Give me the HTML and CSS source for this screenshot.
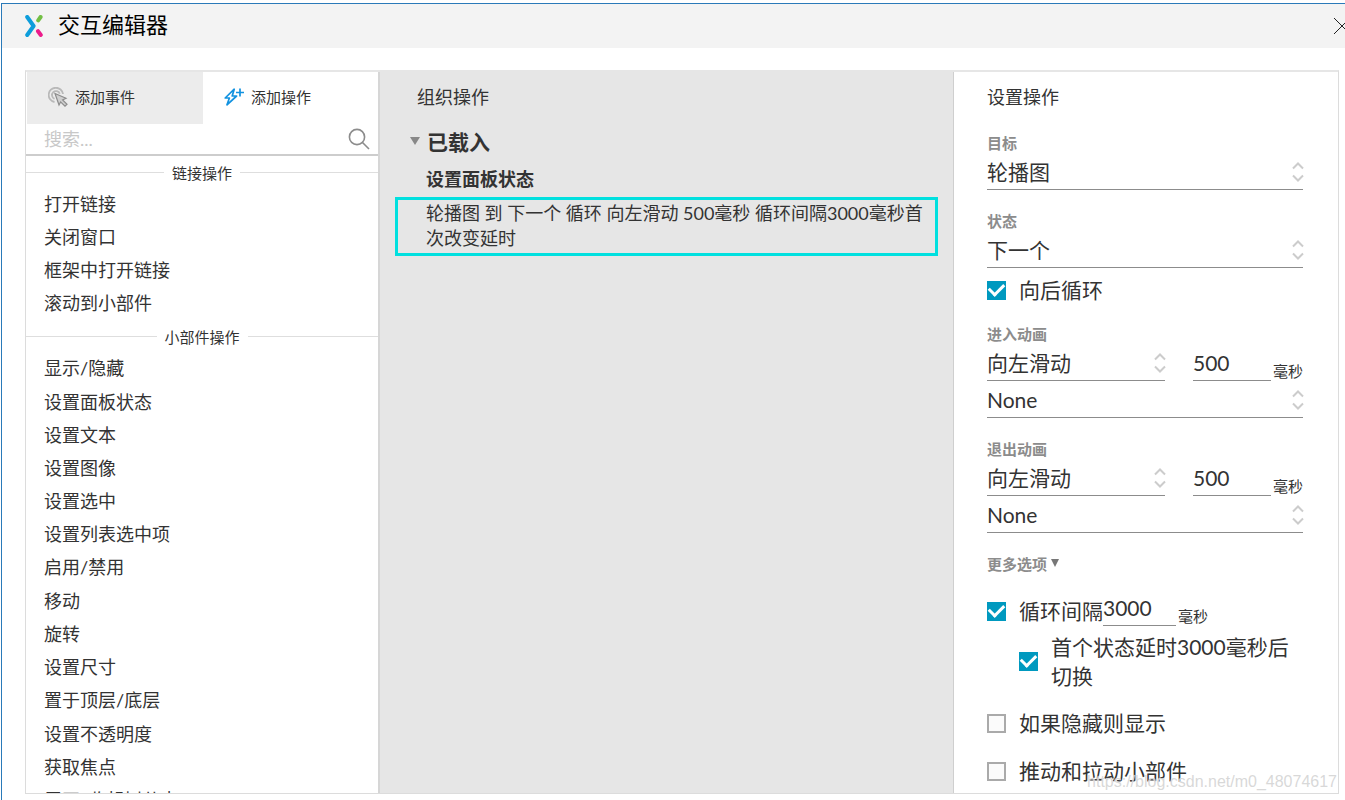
FILE: index.html
```html
<!DOCTYPE html>
<html lang="zh-CN">
<head>
<meta charset="utf-8">
<meta name="viewport" content="width=device-width, initial-scale=1">
<title>交互编辑器</title>
<link rel="stylesheet" href="styles.css">
</head>
<body>
<svg class="sprite" aria-hidden="true">
  <symbol id="updown" viewBox="0 0 12 20"><path d="M1 6.5 6 1.5 11 6.5M1 13.5 6 18.5 11 13.5"/></symbol>
</svg>
<div class="window">
  <header class="titlebar">
    <svg class="logo" viewBox="0 0 18 22" aria-hidden="true">
      <path d="M2.2 2 8.6 11 2.2 20" stroke="#0d9ddb"/>
      <path d="M15.6 2 13.2 5.4" stroke="#72bf44"/>
      <path d="M13 16.2 15.8 20" stroke="#ec1c8b"/>
    </svg>
    <h1 class="title">交互编辑器</h1>
    <button class="close" type="button" aria-label="关闭">
      <svg viewBox="0 0 16 16" aria-hidden="true"><path d="M0 0 16 16M16 0 0 16"/></svg>
    </button>
  </header>

  <main class="panels">
    <section class="panel library">
      <div class="tabs">
        <button class="tab" type="button">
          <svg class="icon-event" viewBox="0 0 20 20" aria-hidden="true">
            <g fill="none" stroke="#b9b9b9" stroke-width="1.8"><path d="M6.5 15A7.2 7.2 0 1 1 15 7"/><path d="M6.5 11.8A4 4 0 1 1 11.8 6.8"/></g>
            <path d="M7 6.5 18 11.3 14.6 12.9 19 17.3 17 19.2 12.6 14.9 11 18Z" fill="#cfcfcf" stroke="#8d8d8d" stroke-width="1.2"/>
          </svg>
          添加事件
        </button>
        <button class="tab tab-active" type="button">
          <svg class="icon-action" viewBox="0 0 20 18" aria-hidden="true"><path d="M10.2 1.2 1.2 10H5.4L3 16.8 12.6 8H8.2ZM16 .4V8.6M12 4.5H20"/></svg>
          添加操作
        </button>
      </div>
      <div class="search">
        <input class="search-input" type="text" placeholder="搜索..." aria-label="搜索">
        <svg class="icon-search" viewBox="0 0 22 22" aria-hidden="true"><circle cx="9" cy="9" r="7.6"/><path d="M14.5 14.5 21 21"/></svg>
      </div>
      <h2 class="group-title">链接操作</h2>
      <ul class="actions">
        <li><button class="action" type="button">打开链接</button></li>
        <li><button class="action" type="button">关闭窗口</button></li>
        <li><button class="action" type="button">框架中打开链接</button></li>
        <li><button class="action" type="button">滚动到小部件</button></li>
      </ul>
      <h2 class="group-title">小部件操作</h2>
      <ul class="actions">
        <li class="pair"><button class="action" type="button">显示/隐藏</button></li>
        <li><button class="action" type="button">设置面板状态</button></li>
        <li><button class="action" type="button">设置文本</button></li>
        <li><button class="action" type="button">设置图像</button></li>
        <li><button class="action" type="button">设置选中</button></li>
        <li><button class="action" type="button">设置列表选中项</button></li>
        <li class="pair"><button class="action" type="button">启用/禁用</button></li>
        <li><button class="action" type="button">移动</button></li>
        <li><button class="action" type="button">旋转</button></li>
        <li><button class="action" type="button">设置尺寸</button></li>
        <li class="pair"><button class="action" type="button">置于顶层/底层</button></li>
        <li><button class="action" type="button">设置不透明度</button></li>
        <li><button class="action" type="button">获取焦点</button></li>
        <li class="pair"><button class="action" type="button">展开/收起树节点</button></li>
      </ul>
    </section>

    <section class="panel organize">
      <h2 class="panel-title">组织操作</h2>
      <button class="event" type="button">
        <svg class="caret" viewBox="0 0 10 8" aria-hidden="true"><path d="M0 0H10L5 8Z"/></svg>
        已载入
      </button>
      <h3 class="event-action">设置面板状态</h3>
      <button class="target" type="button">轮播图 到 下一个 循环 向左滑动 500毫秒 循环间隔3000毫秒首次改变延时</button>
    </section>

    <section class="panel settings">
      <h2 class="panel-title">设置操作</h2>
      <div class="field">
        <label class="label" for="target">目标</label>
        <div class="select"><select id="target"><option>轮播图</option></select><svg class="updown" aria-hidden="true"><use href="#updown"/></svg></div>
      </div>
      <div class="field">
        <label class="label" for="state">状态</label>
        <div class="select"><select id="state"><option>下一个</option></select><svg class="updown" aria-hidden="true"><use href="#updown"/></svg></div>
      </div>
      <label class="check wrap-check"><input type="checkbox" checked><span>向后循环</span></label>
      <div class="field">
        <label class="label" for="anim-in">进入动画</label>
        <div class="timing">
          <div class="select"><select id="anim-in"><option>向左滑动</option></select><svg class="updown" aria-hidden="true"><use href="#updown"/></svg></div>
          <input class="number" id="in-ms" type="text" value="500"><label class="unit" for="in-ms">毫秒</label>
        </div>
        <div class="select easing"><select aria-label="进入缓动"><option>None</option></select><svg class="updown" aria-hidden="true"><use href="#updown"/></svg></div>
      </div>
      <div class="field">
        <label class="label" for="anim-out">退出动画</label>
        <div class="timing">
          <div class="select"><select id="anim-out"><option>向左滑动</option></select><svg class="updown" aria-hidden="true"><use href="#updown"/></svg></div>
          <input class="number" id="out-ms" type="text" value="500"><label class="unit" for="out-ms">毫秒</label>
        </div>
        <div class="select easing"><select aria-label="退出缓动"><option>None</option></select><svg class="updown" aria-hidden="true"><use href="#updown"/></svg></div>
      </div>
      <button class="more" type="button">更多选项 <svg class="caret-small" viewBox="0 0 8 8" aria-hidden="true"><path d="M0 0H8L4 8Z"/></svg></button>
      <div class="repeat">
        <label class="check"><input type="checkbox" checked><span>循环间隔</span></label>
        <input class="number" id="repeat-ms" type="text" value="3000"><label class="unit" for="repeat-ms">毫秒</label>
      </div>
      <label class="check nested"><input type="checkbox" checked><span>首个状态延时3000毫秒后切换</span></label>
      <label class="check option"><input type="checkbox"><span>如果隐藏则显示</span></label>
      <label class="check option"><input type="checkbox"><span>推动和拉动小部件</span></label>
    </section>
  </main>
  <div class="watermark">https://blog.csdn.net/m0_48074617</div>
</div>
</body>
</html>
```
FILE: styles.css
```css
* { box-sizing: border-box; }

body {
  margin: 0;
  background: #fff;
  color: #333;
  font-family: Lato, "Noto Sans CJK SC", sans-serif;
  font-size: 18px;
}

h1, h2, h3, ul { margin: 0; padding: 0; font-size: inherit; font-weight: 400; }
ul { list-style: none; }
button, input, select { font: inherit; color: inherit; background: none; border: 0; border-radius: 0; margin: 0; padding: 0; outline: 0; }
button { text-align: left; }
svg { display: block; flex: none; }
.sprite { position: absolute; width: 0; height: 0; }

.window {
  position: relative;
  display: flex;
  flex-direction: column;
  height: calc(100vh - 3px);
  margin: 3px 0 0 1px;
  border: solid #2a7ab9;
  border-width: 1px 0 0 1px;
  overflow: hidden;
}

.titlebar {
  display: flex;
  align-items: center;
  flex: none;
  height: 44px;
  padding-left: 23px;
  background: #f3f3f3;
}
.logo { width: 18px; height: 22px; fill: none; stroke-width: 4; stroke-linecap: round; stroke-linejoin: round; }
.title { flex: 1; margin-left: 15px; padding-bottom: 2px; color: #000; font-size: 22px; line-height: 42px; }
.close { flex: none; width: 16px; height: 16px; margin-right: -5px; }
.close svg { width: 16px; height: 16px; fill: none; stroke: #222; stroke-width: 1; }

.panels {
  display: grid;
  grid-template-columns: 354px 1fr 385px;
  flex: 1;
  min-height: 0;
  margin: 22px 6px 6px 23px;
  border: 1px solid #dcdcdc;
  border-top: 2px solid #e6e6e6;
}
.panel { min-width: 0; overflow: hidden; }
.panel-title { line-height: 51px; }

.library { border-right: 2px solid #d6d6d6; }
.tabs { display: grid; grid-template-columns: 176px 1fr; height: 52px; padding-left: 1px; font-size: 15px; }
.tab { display: flex; align-items: center; gap: 7px; padding: 0 0 3px 21px; background: #ececec; }
.tab-active { background: #fff; }
.icon-event { width: 20px; height: 20px; }
.icon-action { width: 20px; height: 18px; fill: none; stroke: #1292e0; stroke-width: 1.7; stroke-linejoin: round; }
.search { display: flex; align-items: center; height: 32px; padding: 0 8px 0 18px; border-bottom: 2px solid #cdcdcd; }
.search-input { flex: 1; min-width: 0; }
.search-input::placeholder { color: #c8c8c8; opacity: 1; }
.icon-search { width: 22px; height: 22px; fill: none; stroke: #8c8c8c; stroke-width: 1.6; }

.group-title { display: flex; align-items: center; gap: 8px; height: 32px; font-size: 15px; }
.group-title::before, .group-title::after { content: ""; flex: 1; height: 1px; background: #dedede; }
.action { display: block; width: 100%; height: 33px; padding-left: 18px; line-height: 33px; white-space: nowrap; }
.pair { height: 34px; }

.organize { padding: 0 15px; background: #e6e6e6; }
.organize .panel-title { padding-left: 22px; }
.event { display: flex; align-items: center; gap: 7px; height: 38px; padding: 0 0 2px 15px; font-size: 21px; font-weight: 700; }
.caret { width: 10px; height: 8px; fill: #888; }
.event-action { padding-left: 31px; font-weight: 700; line-height: 36px; }
.target { display: block; width: 100%; padding: 1px 6px 2px 28px; border: 3px solid #00e0df; line-height: 25px; }

.settings { padding: 0 35px 0 33px; border-left: 1px solid #cfcfcf; font-size: 21px; }
.settings .panel-title { margin-bottom: 7px; font-size: 18px; }
.field { margin-bottom: 18px; }
.label, .more { display: flex; align-items: center; gap: 4px; height: 24px; color: #8c8c8c; font-size: 15px; font-weight: 700; }
.select { display: grid; align-items: center; height: 36px; border-bottom: 1px solid #8c8c8c; }
.select > * { grid-area: 1 / 1; }
.select select { width: 100%; height: 35px; padding: 1px 0 0; appearance: none; line-height: 34px; }
.updown { justify-self: end; width: 12px; height: 20px; margin-right: -1px; overflow: visible; fill: none; stroke: #ccc; stroke-width: 2; pointer-events: none; }
.easing { margin-top: 1px; }
.timing { display: grid; grid-template-columns: 1fr 78px 30px; column-gap: 2px; align-items: end; }
.timing .select { margin-right: 26px; }
.number { width: 78px; height: 36px; border-bottom: 1px solid #8c8c8c; }
.unit { font-size: 15px; line-height: 20px; white-space: nowrap; }

.check { display: flex; align-items: center; gap: 13px; line-height: 30px; }
.check input { flex: none; display: grid; width: 19px; height: 19px; appearance: none; border: 2px solid #aaa; background: #fbfbfb; }
.check input:checked { border: 0; background: #0099bf; place-items: center; }
.check input:checked::after { content: ""; width: 12px; height: 7px; margin-bottom: 4px; border: solid #fff; border-width: 0 0 3px 3px; transform: rotate(-45deg); }
.wrap-check { margin: -11px 0 16px; }
.caret-small { width: 8px; height: 8px; fill: #777; }
.repeat { display: flex; align-items: flex-end; margin-top: 15px; }
.repeat .number { width: 73px; margin-right: 2px; }
.nested { margin: 6px 0 18px 32px; line-height: 29px; }
.option { margin-bottom: 18px; }

.watermark {
  position: absolute;
  right: 8px;
  bottom: 7px;
  color: rgba(190, 190, 190, .6);
  font: 16px/22px "Liberation Sans", sans-serif;
  text-shadow: 0 0 1px #fff;
  pointer-events: none;
}
```
